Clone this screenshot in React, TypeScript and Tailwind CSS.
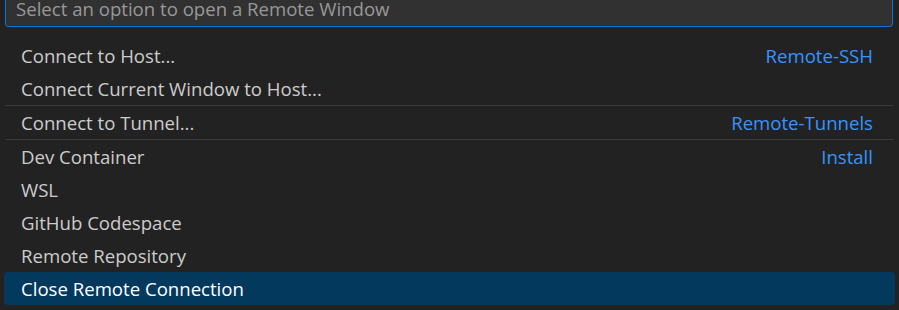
import React from 'react';

type Item = { label: string; detail?: string; selected?: boolean };

const groups: Item[][] = [
  [
    { label: 'Connect to Host...', detail: 'Remote-SSH' },
    { label: 'Connect Current Window to Host...' },
  ],
  [{ label: 'Connect to Tunnel...', detail: 'Remote-Tunnels' }],
  [
    { label: 'Dev Container', detail: 'Install' },
    { label: 'WSL' },
    { label: 'GitHub Codespace' },
    { label: 'Remote Repository' },
    { label: 'Close Remote Connection', selected: true },
  ],
];

const Row: React.FC<{ item: Item }> = ({ item }) => (
  <div
    className={`flex h-[33px] items-center justify-between rounded-[4px] pl-[17px] pr-[22px] ${
      item.selected ? 'bg-[#04395e] text-white' : 'text-[#cccccc]'
    }`}
  >
    <span>{item.label}</span>
    {item.detail && <span className="text-[#3794ff]">{item.detail}</span>}
  </div>
);

const App: React.FC = () => {
  return (
    <div
      className="h-[310px] w-[899px] overflow-hidden bg-[#222222] text-[18.6px]"
      style={{ fontFamily: '"Open Sans", "Noto Sans", sans-serif' }}
    >
      <div className="ml-[5px] mr-[6px] -mt-[10px] flex h-[37px] items-center rounded-[3px] border border-[#0078d4] bg-[#313131] px-[10px] pt-[1px] text-[#989898]">
        Select an option to open a Remote Window
      </div>
      <div className="mt-[12px] px-[4px]">
        {groups.map((group, gi) => (
          <div key={gi}>
            {gi > 0 && <div className="mx-[2px] h-px bg-[#3c3c3c]" />}
            {group.map((item) => (
              <Row key={item.label} item={item} />
            ))}
          </div>
        ))}
      </div>
    </div>
  );
};

export default App;
